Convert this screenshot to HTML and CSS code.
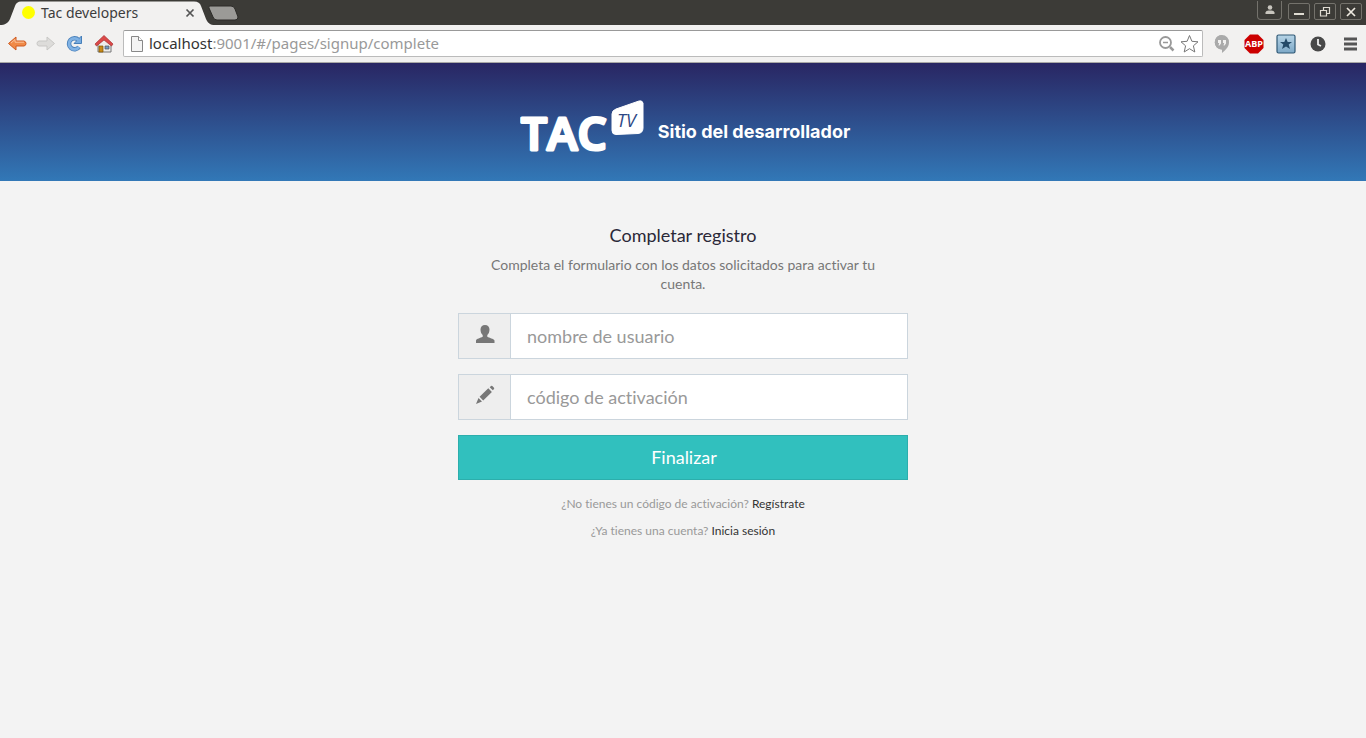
FILE: index.html
```html
<!DOCTYPE html>
<html lang="es">
<head>
<meta charset="utf-8">
<title>Tac developers</title>
<link rel="stylesheet" href="styles.css">
</head>
<body>
<div class="browser">
  <div class="tabstrip">
    <div class="tab">
      <svg class="tab-shape" width="216" height="25" viewBox="0 0 216 25"><path d="M0 25C5 25 8 23 10 19L15 6C16 3 18 1.500 21 1.500H194C198 1.500 200 3 201 6L206 19C208 23 210 25 215 25Z" fill="#f2f1f0"/></svg>
      <span class="favicon"></span>
      <span class="tab-title">Tac developers</span>
      <button class="plain" aria-label="Cerrar pestaña"><svg width="10" height="10" viewBox="0 0 10 10"><path d="M1.500 1.500L8.500 8.500M8.500 1.500L1.500 8.500" stroke="#555" stroke-width="1.700"/></svg></button>
    </div>
    <button class="plain" aria-label="Nueva pestaña"><svg width="32" height="16" viewBox="0 0 32 16"><path d="M3 1H24Q27 1 28 4L31 12Q31 15 28 15H10Q7 15 6 12L2 3Q1 1 3 1Z" fill="#9b9a97" stroke="#2c2b28"/></svg></button>
    <div class="window-buttons">
      <button class="wbtn user" aria-label="Usuario"><svg width="12" height="12" viewBox="0 0 12 12" fill="#c8c5be"><circle cx="6" cy="3.500" r="2.300"/><path d="M1.500 10V8.500Q2 6.800 4.500 6.600H7.500Q10 6.800 10.500 8.500V10Z"/></svg></button>
      <button class="wbtn" aria-label="Minimizar"><svg width="12" height="12" viewBox="0 0 12 12"><path d="M1 8H11" stroke="#dfdbd2" stroke-width="2"/></svg></button>
      <button class="wbtn" aria-label="Restaurar"><svg width="12" height="12" viewBox="0 0 12 12" fill="none" stroke="#dfdbd2" stroke-width="1.200"><path d="M4.500 1.500H10.500V7.500H4.500Z"/><path d="M1.500 4.500H7.500V10H1.500Z" fill="#3c3b37"/></svg></button>
      <button class="wbtn" aria-label="Cerrar"><svg width="12" height="12" viewBox="0 0 12 12"><path d="M2 2L10 10M10 2L2 10" stroke="#eeeae0" stroke-width="1.700"/></svg></button>
    </div>
  </div>
  <div class="toolbar">
    <div class="nav">
      <button class="plain" aria-label="Atrás"><svg width="20" height="20" viewBox="0 0 20 20"><path d="M1.500 9.500L9 3V7H17Q19 7.500 19 9.500T17 12H9V16Z" fill="#f08a48" stroke="#cf5a20"/><path d="M4 9L8 5.500V8.200H17" fill="none" stroke="#fac29b"/></svg></button>
      <button class="plain" aria-label="Adelante"><svg width="20" height="20" viewBox="0 0 20 20"><path d="M18.500 9.500L11 3V7H3Q1 7.500 1 9.500T3 12H11V16Z" fill="#dddcda" stroke="#c8c7c5"/></svg></button>
      <button class="plain" aria-label="Recargar"><svg width="20" height="20" viewBox="0 0 20 20"><path d="M13.500 6A5.500 5.500 0 1 0 14 13" fill="none" stroke="#477fb9" stroke-width="4.500"/><path d="M16.500 2V9.500H9Z" fill="#78ace0" stroke="#477fb9"/><path d="M13.500 6A5.500 5.500 0 1 0 14 13" fill="none" stroke="#80b2e4" stroke-width="2.800"/></svg></button>
      <button class="plain" aria-label="Inicio"><svg width="20" height="20" viewBox="0 0 20 20"><path d="M4 10V18H17V10L10.500 4Z" fill="#ededeb" stroke="#777"/><path d="M5 12H9V18H5Z" fill="#c98b17" stroke="#805500" stroke-width=".7"/><path d="M11 12H15V15H11Z" fill="#719bc7" stroke="#555" stroke-width=".7"/><path d="M1 10L10 1.500L19 10L17.500 12L10 6L2.500 12Z" fill="#dc4949" stroke="#a62f2f" stroke-width=".7"/></svg></button>
    </div>
    <div class="address">
      <svg width="14" height="16" viewBox="0 0 14 16"><path d="M1.500 .5H8.500L12.500 4.500V15.500H1.500Z" fill="#f4f4f4" stroke="#888"/><path d="M8.500 .5V4.500H12.500" fill="#fff" stroke="#888"/></svg>
      <span class="url"><span class="host">localhost</span>:9001/#/pages/signup/complete</span>
      <svg width="18" height="18" viewBox="0 0 18 18" fill="none" stroke="#999"><circle cx="8.500" cy="7.500" r="5.500" stroke-width="1.800"/><path d="M6 7.500H11" stroke-width="1.500"/><path d="M13 12L16.500 15.500" stroke-width="2.500"/></svg>
      <svg width="20" height="20" viewBox="0 0 20 20"><path d="M10.500 1.500L12.900 7.300L19 7.800L14.400 11.800L15.800 18L10.500 14.700L5.200 18L6.600 11.800L2 7.800L8.100 7.300Z" fill="#fff" stroke="#777" stroke-linejoin="round"/></svg>
    </div>
    <div class="extensions">
      <svg width="20" height="20" viewBox="0 0 20 20"><path d="M10 1A7 7 0 0 1 17 8.500C17 13 13 16.500 10 19V15.500A7 7 0 0 1 10 1Z" fill="#aaa"/><path d="M10 1A7.200 7.200 0 0 0 10 15.500Z" fill="#aaa"/><path d="M6 6H9V9.500L7.500 11.500H6.500L7.200 9H6ZM11 6H14V9.500L12.500 11.500H11.500L12.200 9H11Z" fill="#f2f1f0"/></svg>
      <svg width="20" height="20" viewBox="0 0 20 20"><path d="M6 .5H14L19.500 6V14L14 19.500H6L.5 14V6Z" fill="#cc0000"/><text x="10" y="13" class="abp">ABP</text></svg>
      <svg width="20" height="20" viewBox="0 0 20 20"><defs><linearGradient id="blue" x2="0" y2="1"><stop stop-color="#b7d4e6"/><stop offset="1" stop-color="#7da8c7"/></linearGradient></defs><rect x="1" y="1" width="18" height="18" rx="1.500" fill="url(#blue)" stroke="#2f5875" stroke-width="1.200"/><path d="M10 4L11.700 8H16L12.700 10.600L14 15L10 12.400L6 15L7.300 10.600L4 8H8.300Z" fill="#244a68"/></svg>
      <svg width="20" height="20" viewBox="0 0 20 20"><circle cx="10" cy="10" r="7.500" fill="#484848"/><path d="M10 5V10.500L13 12" fill="none" stroke="#eee" stroke-width="1.800"/></svg>
      <svg width="20" height="20" viewBox="0 0 20 20"><path d="M4 5H17M4 10H17M4 15H17" stroke="#555" stroke-width="3"/></svg>
    </div>
  </div>
</div>
<header class="site-header">
  <svg class="logo" width="126" height="66" viewBox="0 0 126 66" role="img" aria-label="TAC TV">
    <text x="1" y="51" class="tac">TAC</text>
    <path d="M96 10L119 2Q122 1 123 4L123 29Q123 34 118 34.500L96 35.500Q92 35.500 92 31.500V15Q92 11.500 96 10Z" fill="#fff" stroke="#fff"/>
    <text x="97" y="28" class="tv">TV</text>
  </svg>
  <span class="site-name">Sitio del desarrollador</span>
</header>
<main class="signup">
  <h1>Completar registro</h1>
  <p class="intro">Completa el formulario con los datos solicitados para activar tu cuenta.</p>
  <form>
    <div class="field">
      <label for="user"><svg width="20" height="20" viewBox="0 0 20 20" fill="#777"><title>Usuario</title><path d="M10 1C12.800 1 14.500 2.800 14.500 5.500C14.500 8.200 13.500 10 12.300 11V12.700C14.500 14 18.500 14.500 19.500 16.500V19H1V16.500C1.500 14.500 5.500 14 7.700 12.700V11C6.500 10 5.500 8.200 5.500 5.500C5.500 2.800 7.200 1 10 1Z"/></svg></label>
      <input id="user" type="text" placeholder="nombre de usuario">
    </div>
    <div class="field">
      <label for="code"><svg width="20" height="20" viewBox="0 0 20 20" fill="#777"><title>Código</title><path d="M14.700 2.200L16 1Q16.700 .5 17.300 1L19 2.800Q19.500 3.500 19 4L17.800 5.200ZM13.300 3.300L16.900 6.900L8.200 15.400L4.600 11.800ZM3.500 13L7 16.500L1 19Z"/></svg></label>
      <input id="code" type="text" placeholder="código de activación">
    </div>
    <button class="submit" type="button">Finalizar</button>
  </form>
  <p class="hint">¿No tienes un código de activación? <a href="#">Regístrate</a></p>
  <p class="hint">¿Ya tienes una cuenta? <a href="#">Inicia sesión</a></p>
</main>
</body>
</html>
```
FILE: styles.css
```css
* { box-sizing: border-box; }
body {
  margin: 0;
  min-height: 100vh;
  background: #f3f3f3;
  font-family: Lato, sans-serif;
  font-variant-ligatures: none;
}
svg { display: block; flex: none; }
.plain { display: block; padding: 0; border: 0; background: none; }
.browser { font-family: "Noto Sans", sans-serif; }
.tabstrip {
  display: flex;
  align-items: center;
  height: 25px;
  background: #3c3b37;
}
.tab {
  position: relative;
  display: flex;
  align-items: center;
  width: 207px;
  height: 25px;
  padding: 0 12px 0 22px;
}
.tab-shape { position: absolute; left: 0; top: 0; }
.favicon { position: relative; width: 13px; height: 13px; border-radius: 50%; background: #ff0; }
.tab-title { position: relative; flex: 1; padding-left: 6px; font-size: 14px; line-height: 20px; color: #3c3c3c; }
.tab .plain { position: relative; }
.window-buttons { display: flex; gap: 4px; margin-left: auto; padding-right: 4px; align-self: flex-start; }
.wbtn {
  display: flex;
  align-items: center;
  justify-content: center;
  width: 22px;
  height: 17px;
  margin-top: 3px;
  padding: 0;
  border: 1px solid #74726c;
  border-radius: 2px;
  background: none;
}
.wbtn.user { width: 25px; height: 19px; margin: 1px 2px 0 0; border-top: 0; border-radius: 0 0 4px 4px; }
.toolbar {
  display: flex;
  align-items: center;
  height: 38px;
  padding: 0 6px 0 7px;
  background: #f2f1f0;
  border-bottom: 1px solid #a9a8a6;
}
.nav { display: flex; gap: 9px; margin-right: 9px; }
.address {
  display: flex;
  flex: 1;
  align-items: center;
  gap: 4px;
  height: 27px;
  padding: 0 3px 0 6px;
  border: 1px solid #bbb;
  border-top-color: #999;
  border-radius: 2px;
  background: #fff;
}
.url { flex: 1; padding: 0 0 2px 1px; font: 15px/20px "Noto Sans", sans-serif; color: #999; }
.host { color: #333; }
.extensions { display: flex; gap: 12px; margin-left: 9px; }
.abp { font: bold 9px "Open Sans", sans-serif; fill: #fff; text-anchor: middle; }
.site-header {
  display: flex;
  justify-content: center;
  gap: 12px;
  height: 118px;
  padding: 36px 0 0 4px;
  background: linear-gradient(#292663, #3278b7);
}
.tac { font: 600 46px "Open Sans", sans-serif; fill: #fff; stroke: #fff; stroke-width: 3; stroke-linejoin: round; }
.tv { font: italic 18px "Open Sans", sans-serif; fill: #2d4785; }
.site-name { padding-top: 21px; font: bold 18px/24px Inter, sans-serif; color: #fff; }
.signup { max-width: 450px; margin: 0 auto; padding-top: 42px; text-align: center; }
h1 { margin: 0 0 8px; font-size: 18px; line-height: 24px; font-weight: 400; color: #2a2838; }
.intro { margin: 0 0 20px; padding: 0 30px; font-size: 14px; line-height: 19px; color: #777; }
.field {
  display: flex;
  height: 46px;
  margin-bottom: 15px;
  border: 1px solid #cbd5dd;
  background: #fff;
}
.field label {
  display: flex;
  justify-content: center;
  width: 52px;
  padding-top: 10px;
  border-right: 1px solid #cbd5dd;
  background: #eee;
}
.field input {
  flex: 1;
  min-width: 0;
  padding: 0 16px;
  border: 0;
  outline: 0;
  background: none;
  font: 18px Lato, sans-serif;
  font-variant-ligatures: none;
  color: #555;
}
.field input::placeholder { color: #999; opacity: 1; }
.submit {
  display: block;
  width: 100%;
  height: 45px;
  margin-bottom: 15px;
  padding: 0 0 2px 2px;
  border: 1px solid #2caeac;
  background: #31c0be;
  font: 18px Lato, sans-serif;
  font-variant-ligatures: none;
  color: #fff;
}
.hint { margin: 0 0 9px; font-size: 12px; line-height: 18px; color: #999; }
.hint a { color: #333; text-decoration: none; }
```
